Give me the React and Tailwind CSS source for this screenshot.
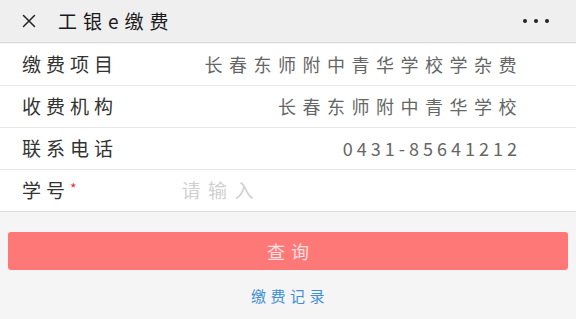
import { X } from "lucide-react";

const rows = [
  { label: "缴费项目", value: "长春东师附中青华学校学杂费" },
  { label: "收费机构", value: "长春东师附中青华学校" },
  { label: "联系电话", value: "0431-85641212", phone: true },
];

export default function App() {
  return (
    <div
      className="w-[576px] h-[319px] bg-[#f5f5f5] overflow-hidden"
      style={{ fontFamily: '"Noto Sans CJK SC", "Noto Sans", sans-serif' }}
    >
      {/* Top bar */}
      <div className="h-[43px] bg-[#efefef] border-b border-[#d9d9d9] flex items-center pl-[18px] pr-[27px]">
        <X className="w-[22px] h-[22px] text-[#222]" strokeWidth={1.6} />
        <span className="ml-[18px] text-[19px] tracking-[6px] text-[#1a1a1a]">
          工银e缴费
        </span>
        <div className="ml-auto flex gap-[7px]">
          <span className="w-[4px] h-[4px] rounded-full bg-[#222]" />
          <span className="w-[4px] h-[4px] rounded-full bg-[#222]" />
          <span className="w-[4px] h-[4px] rounded-full bg-[#222]" />
        </div>
      </div>

      {/* Form */}
      <div className="mt-[1px] bg-white border-b border-[#dcdcdc]">
        {rows.map((r) => (
          <div key={r.label} className="pl-[22px] border-b border-[#e8e8e8]">
            <div className="h-[41px] flex items-center pr-[52px]">
              <span className="text-[19px] tracking-[5px] text-[#333]">
                {r.label}
              </span>
              <span
                className={`ml-auto text-[18px] text-[#666] ${
                  r.phone ? "tracking-[4px] mr-[3px]" : "tracking-[6.5px] mr-[1px]"
                }`}
              >
                {r.value}
              </span>
            </div>
          </div>
        ))}
        <div className="h-[41px] flex items-center pl-[22px]">
          <span className="text-[19px] tracking-[5px] text-[#333]">学号</span>
          <span className="text-[#e33] text-[14px] -mt-[4px]">*</span>
          <span className="ml-[105px] text-[19px] tracking-[7.5px] text-[#d0d0d0]">
            请输入
          </span>
        </div>
      </div>

      {/* Submit */}
      <div className="px-[8px] pt-[20px]">
        <button className="w-full h-[38px] rounded-[3px] bg-[#ff7878] text-[18px] tracking-[6px] pl-[6px] text-[#ffe0e0]">
          查询
        </button>
      </div>
      <div className="mt-[15px] text-center text-[15px] tracking-[4.5px] pl-[4px] text-[#3f8fd6]">
        缴费记录
      </div>
    </div>
  );
}
